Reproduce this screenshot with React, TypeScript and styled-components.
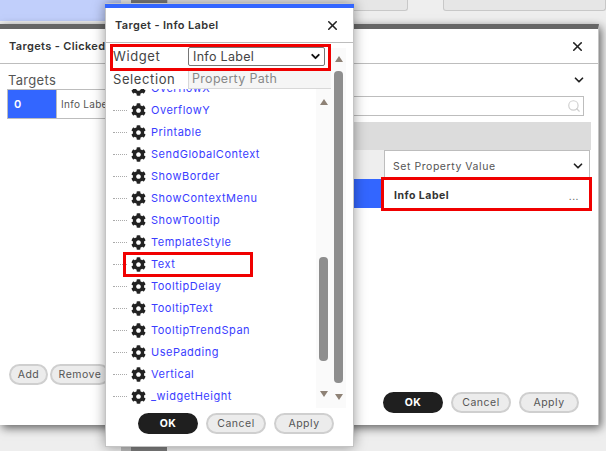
import styled, { createGlobalStyle } from "styled-components";
import { ChevronDown, Search, X } from "lucide-react";
import { FaCog } from "react-icons/fa";

const FONT = `Inter, "Open Sans", "Liberation Sans", sans-serif`;

const GlobalStyle = createGlobalStyle`
  html, body { margin: 0; padding: 0; }
  body { font-family: ${FONT}; color: #333; overflow: hidden; }
`;

const Desktop = styled.div`
  position: relative;
  width: 606px;
  height: 451px;
  overflow: hidden;
  background: #eeeeee;
`;

const BackdropTop = styled.div`
  display: flex;
  height: 11px;
`;

const BlueBand = styled.div`
  width: 121px;
  height: 21px;
  background: #c1cffb;
`;

const DarkTab = styled.div`
  width: 36px;
  height: 3px;
  margin-left: 10px;
  background: #7d7d7d;
`;

const TopTab = styled.div<{ $w: number; $ml: number }>`
  width: ${(p) => p.$w}px;
  margin-left: ${(p) => p.$ml}px;
  box-sizing: border-box;
  height: 11px;
  background: #e6e6e6;
  border: 1px solid #c8c8c8;
  border-top: none;
  border-radius: 0 0 3px 3px;
`;

const BottomTab = styled.div`
  position: absolute;
  left: 121px;
  top: 447px;
  width: 46px;
  height: 4px;
  background: linear-gradient(to right, #bdbdbd 10px, #7d7d7d 10px);
`;

const BackWindow = styled.div`
  position: absolute;
  left: 0;
  top: 24px;
  width: 599px;
  height: 401px;
  box-sizing: border-box;
  display: flex;
  flex-direction: column;
  background: #fff;
  border-top: 5px solid #666;
  border-right: 1px solid #c4c4c4;
  box-shadow: 2px 3px 9px rgba(0, 0, 0, 0.6);
`;

const FrontWindow = styled.div`
  position: absolute;
  left: 105px;
  top: 3px;
  width: 249px;
  height: 444px;
  box-sizing: border-box;
  display: flex;
  flex-direction: column;
  background: #fff;
  border: 1px solid #c4c4c4;
  box-shadow: 0 0 12px rgba(0, 0, 0, 0.4);
`;

const BlueStrip = styled.div`
  height: 4px;
  margin: 0 -1px;
  background: #3366ff;
  flex: none;
`;

const Header = styled.div`
  flex: none;
  height: 35px;
  box-sizing: border-box;
  display: flex;
  align-items: center;
  justify-content: space-between;
  padding: 0 13px 0 9px;
  border-bottom: 1px solid #bdbdbd;
`;

const Title = styled.span`
  font-size: 11px;
  font-weight: 600;
  letter-spacing: 0.35px;
  color: #333;
  white-space: nowrap;
`;

const BackBody = styled.div`
  flex: 1;
  display: flex;
  min-height: 0;
`;

const LeftPane = styled.div`
  width: 110px;
  flex: none;
  display: flex;
  flex-direction: column;
  padding: 8px 0 0 7px;
  box-sizing: border-box;
`;

const PaneLabel = styled.div`
  font-size: 13px;
  line-height: 16px;
  letter-spacing: 0.3px;
  color: #555;
  margin-left: 1px;
`;

const TargetRow = styled.div`
  display: flex;
  height: 30px;
  width: 120px;
  margin-top: 1px;
  box-sizing: border-box;
  border: 1px solid #bdbdbd;
  font-size: 10px;
  align-items: stretch;
`;

const TargetIndex = styled.div`
  width: 48px;
  background: #3366ff;
  color: #fff;
  font-weight: 600;
  font-size: 11px;
  display: flex;
  align-items: center;
  padding-left: 6px;
  box-sizing: border-box;
`;

const TargetName = styled.div`
  padding-left: 4px;
  display: flex;
  align-items: center;
  color: #555;
  letter-spacing: 0.3px;
  border-left: 1px solid #bdbdbd;
  white-space: nowrap;
`;

const ButtonRow = styled.div<{ $gap: number }>`
  display: flex;
  gap: ${(p) => p.$gap}px;
`;

const LeftButtons = styled(ButtonRow)`
  margin-top: auto;
  margin-bottom: 40px;
  margin-left: 2px;
`;

const Pill = styled.button<{ $primary?: boolean; $w: number }>`
  width: ${(p) => p.$w}px;
  height: 21px;
  flex: none;
  padding: 0;
  box-sizing: border-box;
  border-radius: 11px;
  font-family: ${FONT};
  font-size: 10.5px;
  letter-spacing: 0.5px;
  font-weight: ${(p) => (p.$primary ? 700 : 400)};
  color: ${(p) => (p.$primary ? "#fff" : "#555")};
  background: ${(p) => (p.$primary ? "#1f1f1f" : "#ececec")};
  border: 2px solid ${(p) => (p.$primary ? "#1f1f1f" : "#cfcfcf")};
`;

const RightPane = styled.div`
  flex: 1;
  min-width: 0;
  display: flex;
  flex-direction: column;
  align-items: flex-end;
  padding-right: 7px;
`;

const ChevronLine = styled.div`
  height: 32px;
  display: flex;
  align-items: center;
  padding-right: 5px;
`;

const SearchBox = styled.div`
  width: 240px;
  height: 20px;
  margin-right: 7px;
  box-sizing: border-box;
  border: 1px solid #bdbdbd;
  display: flex;
  align-items: center;
  justify-content: flex-end;
  padding-right: 2px;
`;

const GreyBand = styled.div`
  width: 240px;
  height: 28px;
  margin-top: 6px;
  background: #dcdcdc;
`;

const ActionGrid = styled.div`
  width: 240px;
  display: flex;
  flex-direction: column;
  position: relative;
`;

const ActionRow = styled.div`
  display: flex;
  height: 29px;
`;

const HeadCell = styled.div`
  flex: 1;
  background: #eeeeee;
`;

const SelectCell = styled.div`
  width: 206px;
  margin-right: 1px;
  box-sizing: border-box;
  border: 1px solid #bdbdbd;
  border-bottom: none;
  font-size: 10.5px;
  letter-spacing: 0.55px;
  color: #555;
  display: flex;
  align-items: center;
  justify-content: space-between;
  padding: 2px 4px 0 8px;
`;

const BlueCell = styled.div`
  flex: 1;
  background: #3366ff;
`;

const ValueCell = styled.div`
  width: 206px;
  margin-right: 1px;
  box-sizing: border-box;
  font-size: 10.5px;
  letter-spacing: 0.5px;
  font-weight: 700;
  color: #333;
  display: flex;
  align-items: center;
  justify-content: space-between;
  padding: 4px 11px 0 10px;
`;

const Dots = styled.span`
  font-weight: 400;
  color: #555;
  font-size: 10px;
`;

const RedMark = styled.div<{ $l: number; $t: number; $w: number; $h: number }>`
  position: absolute;
  left: ${(p) => p.$l}px;
  top: ${(p) => p.$t}px;
  width: ${(p) => p.$w}px;
  height: ${(p) => p.$h}px;
  box-sizing: border-box;
  border: 3px solid #f00000;
  pointer-events: none;
`;

const BackFooter = styled(ButtonRow)`
  margin-top: auto;
  margin-bottom: 12px;
  padding-right: 12px;
`;

const FrontBody = styled.div`
  flex: 1;
  min-height: 0;
  display: flex;
  flex-direction: column;
`;

const FormRow = styled.div<{ $h: number }>`
  height: ${(p) => p.$h}px;
  flex: none;
  display: flex;
  align-items: center;
  padding-left: 7px;
`;

const FormLabel = styled.span`
  width: 75px;
  flex: none;
  font-size: 13px;
  letter-spacing: 0.6px;
  color: #444;
`;

const FakeSelect = styled.div`
  width: 137px;
  height: 19px;
  box-sizing: border-box;
  border: 1px solid #767676;
  border-radius: 2px;
  display: flex;
  align-items: center;
  justify-content: space-between;
  padding: 0 2px 0 4px;
  font-size: 12.5px;
  letter-spacing: 0.3px;
  color: #444;
`;

const PathInput = styled.div`
  width: 143px;
  height: 20px;
  box-sizing: border-box;
  background: #f5f5f5;
  border-left: 1px solid #d8d8d8;
  border-bottom: 1px solid #d8d8d8;
  font-size: 12.5px;
  letter-spacing: 0.3px;
  color: #888;
  padding-left: 3px;
  line-height: 19px;
`;

const TreeArea = styled.div`
  flex: 1;
  min-height: 0;
  display: flex;
  padding-right: 7px;
  margin-bottom: 5px;
`;

const Tree = styled.div`
  flex: 1;
  min-width: 0;
  overflow: hidden;
  padding-left: 7px;
`;

const TreeList = styled.div`
  margin-top: -12px;
  display: flex;
  flex-direction: column;
`;

const TreeRow = styled.div`
  height: 22px;
  flex: none;
  display: flex;
  align-items: center;
`;

const Dotted = styled.span`
  width: 14px;
  margin-right: 4px;
  border-top: 1px dotted #aaa;
  flex: none;
`;

const RowLabel = styled.span`
  margin-left: 5px;
  font-size: 11px;
  letter-spacing: 0.5px;
  color: #3a3dff;
  white-space: nowrap;
`;

const Track = styled.div<{ $tall?: boolean }>`
  width: 15px;
  flex: none;
  display: flex;
  flex-direction: column;
  align-items: center;
  background: #fafafa;
  margin-top: ${(p) => (p.$tall ? -41 : 0)}px;
`;

const Thumb = styled.div<{ $h: number; $mt: number }>`
  width: 9px;
  height: ${(p) => p.$h}px;
  margin-top: ${(p) => p.$mt}px;
  border-radius: 4px;
  background: #8e8e8e;
`;

const Arrow = styled.div<{ $down?: boolean; $gap: number }>`
  width: 0;
  height: 0;
  border-left: 4.5px solid transparent;
  border-right: 4.5px solid transparent;
  ${(p) => (p.$down ? "border-top" : "border-bottom")}: 6px solid #8e8276;
  ${(p) => (p.$down ? "margin-bottom" : "margin-top")}: ${(p) => p.$gap}px;
`;

const Spacer = styled.div`
  flex: 1;
`;

const FrontFooter = styled(ButtonRow)`
  flex: none;
  margin-left: 32px;
  margin-bottom: 12px;
`;

const ROWS = [
  "OverflowX",
  "OverflowY",
  "Printable",
  "SendGlobalContext",
  "ShowBorder",
  "ShowContextMenu",
  "ShowTooltip",
  "TemplateStyle",
  "Text",
  "TooltipDelay",
  "TooltipText",
  "TooltipTrendSpan",
  "UsePadding",
  "Vertical",
  "_widgetHeight",
];

export default function App() {
  return (
    <Desktop>
      <GlobalStyle />
      <BackdropTop>
        <BlueBand />
        <DarkTab />
        <TopTab $w={241} $ml={0} />
        <TopTab $w={163} $ml={35} />
      </BackdropTop>
      <BottomTab />

      <BackWindow>
        <Header>
          <Title>Targets - Clicked</Title>
          <X size={15} strokeWidth={2.5} color="#222" />
        </Header>
        <BackBody>
          <LeftPane>
            <PaneLabel>Targets</PaneLabel>
            <TargetRow>
              <TargetIndex>0</TargetIndex>
              <TargetName>Info Label</TargetName>
            </TargetRow>
            <LeftButtons $gap={2}>
              <Pill $w={39}>Add</Pill>
              <Pill $w={60}>Remove</Pill>
            </LeftButtons>
          </LeftPane>
          <RightPane>
            <ChevronLine>
              <ChevronDown size={14} strokeWidth={3} color="#222" />
            </ChevronLine>
            <SearchBox>
              <Search size={14} strokeWidth={2} color="#cfcfcf" />
            </SearchBox>
            <GreyBand />
            <ActionGrid>
              <ActionRow>
                <HeadCell />
                <SelectCell>
                  Set Property Value
                  <ChevronDown size={14} strokeWidth={3} color="#222" />
                </SelectCell>
              </ActionRow>
              <ActionRow>
                <BlueCell />
                <ValueCell>
                  Info Label
                  <Dots>...</Dots>
                </ValueCell>
              </ActionRow>
              <RedMark $l={30} $t={27} $w={211} $h={34} />
            </ActionGrid>
            <BackFooter $gap={8}>
              <Pill $primary $w={60}>OK</Pill>
              <Pill $w={60}>Cancel</Pill>
              <Pill $w={60}>Apply</Pill>
            </BackFooter>
          </RightPane>
        </BackBody>
      </BackWindow>

      <FrontWindow>
        <BlueStrip />
        <Header>
          <Title>Target - Info Label</Title>
          <X size={15} strokeWidth={2.5} color="#222" />
        </Header>
        <FrontBody>
          <FormRow $h={26}>
            <FormLabel>Widget</FormLabel>
            <FakeSelect>
              Info Label
              <ChevronDown size={13} strokeWidth={3.5} color="#111" />
            </FakeSelect>
          </FormRow>
          <FormRow $h={20}>
            <FormLabel>Selection</FormLabel>
            <PathInput>Property Path</PathInput>
          </FormRow>
          <TreeArea>
            <Tree>
              <TreeList>
                {ROWS.map((name) => (
                  <TreeRow key={name}>
                    <Dotted />
                    <FaCog size={15} color="#222" />
                    <RowLabel>{name}</RowLabel>
                  </TreeRow>
                ))}
              </TreeList>
            </Tree>
            <Track>
              <Arrow $gap={10} />
              <Thumb $h={104} $mt={152} />
              <Spacer />
              <Arrow $down $gap={11} />
            </Track>
            <Track $tall>
              <Arrow $gap={8} />
              <Thumb $h={312} $mt={9} />
              <Spacer />
              <Arrow $down $gap={8} />
            </Track>
          </TreeArea>
          <FrontFooter $gap={8}>
            <Pill $primary $w={60}>OK</Pill>
            <Pill $w={60}>Cancel</Pill>
            <Pill $w={60}>Apply</Pill>
          </FrontFooter>
        </FrontBody>
        <RedMark $l={4} $t={40} $w={221} $h={27} />
        <RedMark $l={17} $t={248} $w={130} $h={25} />
      </FrontWindow>
    </Desktop>
  );
}
